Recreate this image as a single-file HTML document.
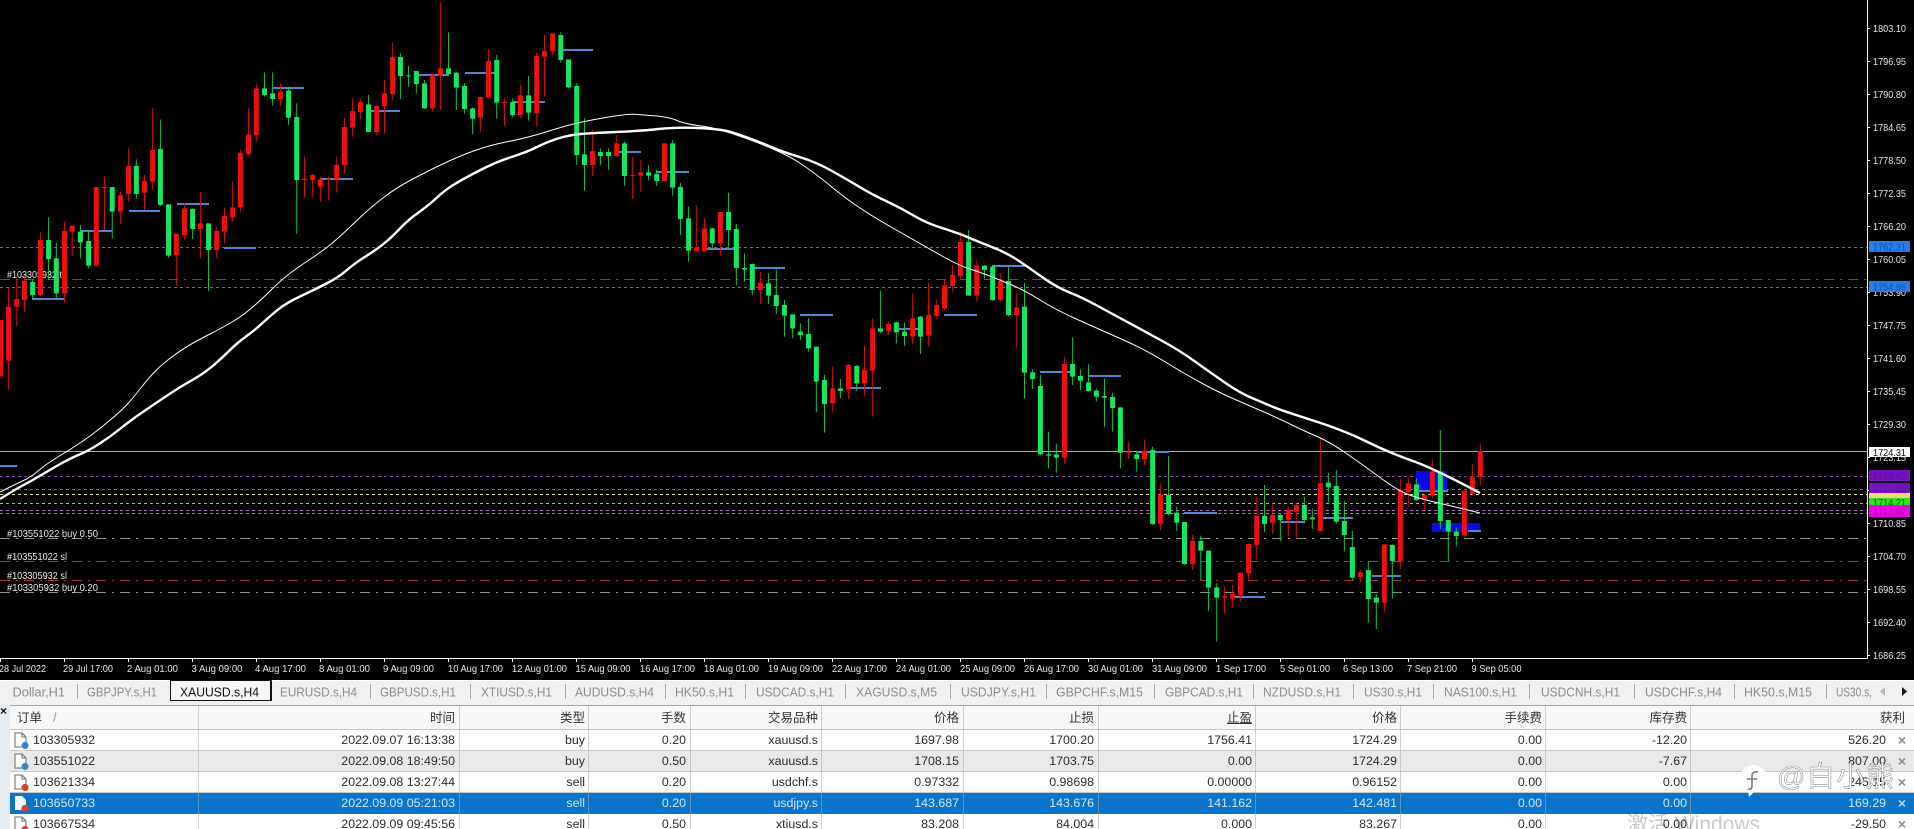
<!DOCTYPE html>
<html lang="zh"><head><meta charset="utf-8"><title>XAUUSD.s,H4</title>
<style>
html,body{margin:0;padding:0;background:#000}
#p{position:relative;width:1914px;height:829px;overflow:hidden;background:#000;font-family:"Liberation Sans","Noto Sans CJK SC",sans-serif}
#c{position:absolute;left:0;top:0}
#c text{font-family:"Liberation Sans",sans-serif;font-size:10.5px;fill:#e8e8e8}
#t{position:absolute;left:0;top:680px}
#t text{font-family:"Liberation Sans",sans-serif;font-size:13px;fill:#8c8c8c}
#tabs{position:absolute;left:0;top:680px;width:1914px;height:25px;background:#f0f0f0;border-top:1px solid #fff;box-sizing:border-box}
#tabs i{position:absolute;top:3px;width:1px;height:15px;background:#a8a8a8}
#tabs b{position:absolute;left:170px;top:-1px;width:99px;height:19px;background:#f6f6f6;border:1px solid #111;border-right-width:2px}
#tb{position:absolute;left:0;top:705px;width:1914px;height:124px;background:#fff;border-top:1px solid #a8a8a8;box-sizing:border-box}
.h,.r{position:absolute;left:0;width:1914px;font-size:12.4px;color:#2a2a2a}
.h{top:705px;height:25px;line-height:25px;background:#f7f7f7;border-top:1px solid #a8a8a8;border-bottom:1px solid #c4c4c4;box-sizing:border-box;font-size:12.5px;color:#333}
.r{height:21px;line-height:21px;border-bottom:1px solid #c8c8c8;box-sizing:border-box;background:#fff}
.h span,.r span{position:absolute;top:0;white-space:nowrap}
.g{background:#e9e9e9}.s{background:#0a74cb;color:#cfe6fb;border-bottom-color:#0a74cb}
.c1{left:33px}.c2{right:1459px}.c3{right:1329px}.c4{right:1228px}.c5{right:1096px}.c6{right:955px}.c7{right:820px}.c8{right:662px}.c9{right:517px}.c10{right:372px}.c11{right:227px}.c12{right:28px}
.x{right:8px;color:#8a8a8a;font-size:14px;font-weight:bold}
.s .x{color:#b8d4ee}
.v{position:absolute;top:705px;width:1px;height:124px;background:rgba(170,170,170,.55)}
.ic{position:absolute;left:13px;width:17px;height:18px}
#ls{position:absolute;left:0;top:705px;width:10px;height:124px;background:#e6ebf0;font-size:12px;font-weight:bold;line-height:12px;color:#111}
#win{position:absolute;left:1627px;top:811px;font-size:21px;line-height:28px;color:#c9c9c9;white-space:nowrap;mix-blend-mode:multiply}
#wm{position:absolute;left:1777px;top:755px;font-size:28px;line-height:44px;letter-spacing:1.5px;color:#fff;-webkit-text-stroke:.6px #8d8d8d;white-space:nowrap;opacity:.95}
</style></head><body><div id="p">
<svg id="c" width="1914" height="680" viewBox="0 0 1914 680" fill="none">
<path d="M0 247.5H1867M0 287.5H1867" stroke="#4a78b8" stroke-dasharray="3 3"/>
<path d="M0 279.5H1867" stroke="#a83232" stroke-dasharray="10 6 2 6"/>
<path d="M0 561.5H1867M0 580.5H1867" stroke="#b03434" stroke-dasharray="10 6 2 6"/>
<path d="M0 538.5H1867M0 592.5H1867" stroke="#7f9f84" stroke-dasharray="10 6 2 6"/>
<path d="M0 476.5H1867M0 489.5H1867" stroke="#7a4aa8" stroke-dasharray="3 3"/>
<path d="M0 494.5H1867" stroke="#e8e0a8" stroke-dasharray="3 3"/>
<path d="M0 503.5H1867" stroke="#8ed08e" stroke-dasharray="3 3"/>
<path d="M0 510.5H1867M0 513.5H1867" stroke="#b070c0" stroke-dasharray="3 3"/>
<path d="M0 451.5H1867" stroke="#a8a8a8"/>
<text x="7" y="278" textLength="60" lengthAdjust="spacingAndGlyphs">#103305932 tp</text>
<text x="7" y="537" textLength="91" lengthAdjust="spacingAndGlyphs">#103551022 buy 0.50</text>
<text x="7" y="560" textLength="60" lengthAdjust="spacingAndGlyphs">#103551022 sl</text>
<text x="7" y="579" textLength="60" lengthAdjust="spacingAndGlyphs">#103305932 sl</text>
<text x="7" y="591" textLength="91" lengthAdjust="spacingAndGlyphs">#103305932 buy 0.20</text>
<rect x="1416" y="471" width="31" height="19" fill="#0808e8"/><rect x="1432" y="523" width="48" height="9" fill="#0808e8"/>
<path stroke="#4f86d8" stroke-width="2" d="M33 299H64M80 231H112M129 211H160M177 204H209M224 248H256M273 88H304M320 179H353M369 111H400M416 75H449M465 73H496M513 102H545M561 50H593M616 152H641M656 172H689M705 249H736M752 268H785M800 315H833M944 315H977M992 266H1025M849 388H881M897 329H921M1040 372H1073M1089 376H1121M1137 452H1169M1184 513H1217M1233 597H1265M0 466H17M1419 491H1448M1468 531H1481M1372 576H1401M1281 522H1305M1323 518H1353"/>
<g transform="scale(.40816 .33333)">
<path stroke="#d01018" stroke-width="2.45" d="M21 865V1170M41 840V978M60 825V935M99 697V890M158 665V908M177 677V768M236 561V800M256 530V690M295 575V672M315 445V605M354 525V630M374 325V568M432 702V858M452 610V718M491 575V775M531 680V775M550 625V730M570 545V665M589 450V635M609 325V470M628 250V425M687 250V317M746 470V592M766 522V590M785 530V605M805 530V600M825 470V578M844 355V520M864 295V410M883 295V357M923 315V405M942 240V400M962 128V300M1060 222V335M1079 8V330M1177 290V395M1197 148V295M1236 295V378M1275 255V355M1315 157V380M1334 105V290M1354 100V165M1452 390V528M1511 405V470M1550 470V597"/>
<path stroke="#ee1010" stroke-width="12.25" d="M2 960V1130M21 920V1082M41 897V920M60 843V900M99 720V885M158 693V880M177 677V695M236 561V797M256 561V564M295 585V635M315 498V582M354 543V578M374 450V545M432 702V765M452 625V705M491 670V687M531 693V750M550 648V695M570 622V652M589 458V622M609 403V462M628 265V405M687 275V297M746 536V540M766 525V540M785 538V560M805 536V539M825 495V538M844 381V495M864 333V383M883 306V336M923 318V396M942 280V318M962 171V282M1060 225V325M1079 205V228M1177 291V353M1197 183V293M1236 306V309M1275 286V345M1315 168V340M1334 153V170M1354 100V153M1452 453V495M1511 430V468M1550 525V528"/>
<path stroke="#14c050" stroke-width="2.45" d="M80 838V900M119 652V840M138 728V895M197 675V775M217 690V805M275 561V715M334 478V597M393 358V618M413 613V773M472 625V717M511 670V873M648 217V290M668 217V317M707 260V375M727 310V702M903 285V396M981 160V297M1001 197V260M1020 213V280M1040 240V327M1099 97V225M1118 215V330M1138 250V340M1158 322V402M1217 165V357M1256 295V352M1295 228V362M1374 97V188M1393 178V265M1413 250V495M1432 355V572M1471 445V495M1491 445V510M1530 425V557"/>
<path stroke="#16e660" stroke-width="12.25" d="M80 846V885M119 720V777M138 775V880M197 695V727M217 723V797M275 561V635M334 498V582M393 447V615M413 613V767M472 627V687M511 670V750M648 265V285M668 280V297M707 272V353M727 351V540M903 313V396M981 171V228M1001 226V229M1020 213V252M1040 250V325M1099 205V222M1118 218V263M1138 258V327M1158 325V356M1217 180V308M1256 306V345M1295 286V338M1374 105V180M1393 178V262M1413 258V465M1432 463V495M1471 456V468M1491 456V468M1530 430V528"/>
</g>
<g transform="translate(640 0) scale(.40816 .33333)">
<path stroke="#d01018" stroke-width="2.45" d="M2 480V575M60 430V545M138 615V755M158 655V755M197 635V767M295 815V913M472 1100V1237M511 1090V1197M550 1038V1188M570 955V1250M609 965V1005M668 880V1033M707 848V1040M727 898V958M746 840V932M766 795V875M785 695V840M825 782V905M883 820V905M923 880V1045M1040 1070V1390M1197 1325V1377M1236 1318V1395M1275 1452V1590M1354 1605V1710M1432 1760V1840M1452 1755V1825M1471 1718V1805M1491 1632V1742M1511 1490V1680M1550 1510V1602"/>
<path stroke="#ee1010" stroke-width="12.25" d="M2 517V527M60 430V543M138 742V753M158 685V753M197 636V730M295 848V870M472 1165V1210M511 1095V1168M550 1110V1150M570 985V1112M609 972V992M668 955V1010M707 945V1007M727 915V948M746 856V925M766 825V858M785 726V828M825 797V887M883 843V900M923 922V945M1040 1092V1373M1197 1355V1358M1236 1352V1378M1275 1483V1572M1354 1623V1692M1432 1788V1792M1452 1782V1796M1471 1718V1785M1491 1632V1720M1511 1548V1635M1550 1545V1568"/>
<path stroke="#14c050" stroke-width="2.45" d="M21 495V540M41 510V558M80 420V587M99 548V705M119 620V785M177 683V748M217 578V740M236 672V855M256 760V845M275 790V885M315 820V912M334 808V942M354 900V1010M374 943V1015M393 970V1020M413 955V1055M432 1040V1238M452 1125V1298M491 1137V1195M531 1095V1173M589 872V1000M628 965V1030M648 968V1037M687 948V1062M805 690V887M844 795V835M864 798V903M903 800V950M942 848V1195M962 1107V1167M981 1125V1365M1001 1295V1405M1020 1330V1418M1060 1012V1155M1079 1108V1170M1099 1093V1175M1118 1165V1205M1138 1135V1280M1158 1178V1295M1177 1222V1405M1217 1352V1415M1256 1340V1575M1295 1368V1545M1315 1520V1593M1334 1566V1695M1374 1607V1740M1393 1652V1833M1413 1750V1925M1530 1455V1595"/>
<path stroke="#16e660" stroke-width="12.25" d="M21 517V527M41 522V543M80 430V563M99 561V657M119 655V752M177 685V730M217 636V690M236 687V804M256 804V809M275 792V870M315 850V887M334 885V918M354 915V947M374 943V985M393 995V1005M413 1002V1045M432 1040V1145M452 1140V1212M491 1165V1173M531 1098V1150M589 985V995M628 967V997M648 995V1008M687 950V1010M805 726V887M844 797V810M864 800V900M903 843V945M942 920V1118M962 1117V1137M981 1158V1363M1001 1363V1367M1020 1363V1373M1060 1092V1130M1079 1128V1142M1099 1147V1173M1118 1172V1190M1138 1188V1193M1158 1191V1224M1177 1222V1358M1217 1363V1377M1256 1350V1572M1295 1485V1542M1315 1538V1568M1334 1566V1692M1374 1623V1652M1393 1652V1763M1413 1762V1793M1530 1548V1572"/>
</g>
<g transform="translate(1240 430) scale(.33333)">
<path stroke="#d01018" stroke-width="3" d="M145 230V320M169 220V325M241 25V305M361 418V460M433 343V548M481 145V418M505 140V230M553 190V237M577 88V205M673 182V322M697 103V195M721 40V165"/>
<path stroke="#ee1010" stroke-width="15" d="M145 240V270M169 225V245M241 160V303M361 427V441M433 343V518M481 180V393M505 160V187M553 195V210M577 125V197M673 182V317M697 140V192M721 63V140"/>
<path stroke="#14c050" stroke-width="3" d="M121 250V333M193 200V275M217 235V297M265 128V218M289 120V280M313 213V365M337 303V450M385 395V577M409 492V597M457 343V505M529 145V212M601 0V297M625 270V393M649 293V350"/>
<path stroke="#16e660" stroke-width="15" d="M121 255V270M193 225V270M217 262V268M265 158V172M289 168V275M313 273V315M337 351V443M385 420V507M409 503V518M457 345V393M529 163V210M601 125V273M625 270V305M649 305V318"/>
</g>
<path stroke="#fff" stroke-width="1" d="M0 492Q14 485 22.5 481Q31 477 38 471Q45 465 53 460Q61 455 71.5 448.5Q82 442 92 434.5Q102 427 112 418.5Q122 410 127.5 404Q133 398 140 389Q147 380 154 372.5Q161 365 172.5 356.5Q184 348 194 342.5Q204 337 211 333.5Q218 330 229.5 323.5Q241 317 251 308.5Q261 300 269.5 291.5Q278 283 286 276.5Q294 270 310.5 259Q327 248 337 239Q347 230 359 218.5Q371 207 383.5 197.5Q396 188 410 180.5Q424 173 440.5 165Q457 157 473.5 151Q490 145 508.5 141.5Q527 138 549 131Q571 124 589.5 120.5Q608 117 618.5 115.5Q629 114 634.5 114.3Q640 114.6 654.5 115.8Q669 117 677 120.5Q685 124 701.5 126Q718 128 750.5 140Q783 152 799 162.5Q815 173 835.5 190Q856 207 891 227Q926 247 942 256Q958 265 968.5 268.5Q979 272 987 275Q995 278 1009.5 284Q1024 290 1040 300Q1056 310 1078.5 320Q1101 330 1123.5 340Q1146 350 1164.5 361.5Q1183 373 1201.5 383Q1220 393 1234 399Q1248 405 1264 412Q1280 419 1291 424.5Q1302 430 1316 436Q1330 442 1346.5 453.5Q1363 465 1380 477.5Q1397 490 1407 494Q1417 498 1438.5 503Q1460 508 1480 513"/>
<path stroke="#fff" stroke-width="2.4" stroke-linejoin="round" d="M0 499Q16 489 24.5 484.5Q33 480 43 474Q53 468 62 463Q71 458 79.5 454.5Q88 451 99 444Q110 437 120.5 428.5Q131 420 145 410.5Q159 401 169.5 394Q180 387 188 382.5Q196 378 202 374Q208 370 215 364Q222 358 229.5 350.5Q237 343 246 336.5Q255 330 262 323.5Q269 317 277.5 310Q286 303 300 296.5Q314 290 326.5 283.5Q339 277 347 270Q355 263 365.5 256.5Q376 250 384 243.5Q392 237 400 228.5Q408 220 418.5 212.5Q429 205 437 197.5Q445 190 454 184.5Q463 179 479.5 170.5Q496 162 511.5 157Q527 152 537 147Q547 142 558 138.5Q569 135 581 134Q593 133 616.5 132Q640 131 658.5 129Q677 127 698.5 128Q720 129 729 131.5Q738 134 750 138.5Q762 143 772.5 147.5Q783 152 799.5 157Q816 162 832 171Q848 180 860.5 187.5Q873 195 887 201.5Q901 208 913.5 215.5Q926 223 942 228Q958 233 968.5 237.5Q979 242 993 247.5Q1007 253 1017.5 260Q1028 267 1042 277Q1056 287 1068.5 292Q1081 297 1095 304.5Q1109 312 1125.5 321Q1142 330 1160.5 340Q1179 350 1195 361.5Q1211 373 1225.5 383Q1240 393 1252 398Q1264 403 1272 406.5Q1280 410 1311.5 420Q1343 430 1366.5 441.5Q1390 453 1411.5 460.5Q1433 468 1480 493"/>
<path stroke="#fff" d="M1867.5 0V658.5M0 658.5H1867.5"/>
<path stroke="#fff" d="M1867 28.5h3M1867 61.5h3M1867 94.5h3M1867 127.5h3M1867 160.5h3M1867 193.5h3M1867 226.5h3M1867 259.5h3M1867 292.5h3M1867 325.5h3M1867 358.5h3M1867 391.5h3M1867 424.5h3M1867 457.5h3M1867 490.5h3M1867 523.5h3M1867 556.5h3M1867 589.5h3M1867 622.5h3M1867 655.5h3"/>
<path stroke="#fff" d="M0.5 658v4M64.5 658v4M128.5 658v4M192.5 658v4M256.5 658v4M320.5 658v4M384.5 658v4M448.5 658v4M512.5 658v4M576.5 658v4M640.5 658v4M704.5 658v4M768.5 658v4M832.5 658v4M896.5 658v4M960.5 658v4M1024.5 658v4M1088.5 658v4M1152.5 658v4M1216.5 658v4M1280.5 658v4M1344.5 658v4M1408.5 658v4M1472.5 658v4"/>
<g>
<text x="1873" y="32" textLength="33" lengthAdjust="spacingAndGlyphs">1803.10</text>
<text x="1873" y="65" textLength="33" lengthAdjust="spacingAndGlyphs">1796.95</text>
<text x="1873" y="98" textLength="33" lengthAdjust="spacingAndGlyphs">1790.80</text>
<text x="1873" y="131" textLength="33" lengthAdjust="spacingAndGlyphs">1784.65</text>
<text x="1873" y="164" textLength="33" lengthAdjust="spacingAndGlyphs">1778.50</text>
<text x="1873" y="197" textLength="33" lengthAdjust="spacingAndGlyphs">1772.35</text>
<text x="1873" y="230" textLength="33" lengthAdjust="spacingAndGlyphs">1766.20</text>
<text x="1873" y="263" textLength="33" lengthAdjust="spacingAndGlyphs">1760.05</text>
<text x="1873" y="296" textLength="33" lengthAdjust="spacingAndGlyphs">1753.90</text>
<text x="1873" y="329" textLength="33" lengthAdjust="spacingAndGlyphs">1747.75</text>
<text x="1873" y="362" textLength="33" lengthAdjust="spacingAndGlyphs">1741.60</text>
<text x="1873" y="395" textLength="33" lengthAdjust="spacingAndGlyphs">1735.45</text>
<text x="1873" y="428" textLength="33" lengthAdjust="spacingAndGlyphs">1729.30</text>
<text x="1873" y="461" textLength="33" lengthAdjust="spacingAndGlyphs">1723.15</text>
<text x="1873" y="527" textLength="33" lengthAdjust="spacingAndGlyphs">1710.85</text>
<text x="1873" y="560" textLength="33" lengthAdjust="spacingAndGlyphs">1704.70</text>
<text x="1873" y="593" textLength="33" lengthAdjust="spacingAndGlyphs">1698.55</text>
<text x="1873" y="626" textLength="33" lengthAdjust="spacingAndGlyphs">1692.40</text>
<text x="1873" y="659" textLength="33" lengthAdjust="spacingAndGlyphs">1686.25</text>
</g>
<rect x="1869" y="241" width="41" height="11" fill="#2a80e8"/><text x="1873" y="250.5" textLength="33" lengthAdjust="spacingAndGlyphs" style="fill:#0c4cae">1762.31</text>
<rect x="1869" y="281" width="41" height="11" fill="#2a80e8"/><text x="1873" y="290.5" textLength="33" lengthAdjust="spacingAndGlyphs" style="fill:#0c4cae">1754.86</text>
<rect x="1869" y="447" width="41" height="10" fill="#fff"/><text x="1873" y="456" textLength="33" lengthAdjust="spacingAndGlyphs" style="fill:#111">1724.31</text>
<rect x="1869" y="470" width="41" height="11" fill="#7a10c4"/><text x="1873" y="479.5" textLength="33" lengthAdjust="spacingAndGlyphs" style="fill:#4c1c8e">1719.63</text>
<rect x="1869" y="483" width="41" height="10" fill="#7a10c4"/><text x="1873" y="492" textLength="33" lengthAdjust="spacingAndGlyphs" style="fill:#4c1c8e">1716.23</text>
<rect x="1869" y="493" width="41" height="5" fill="#f0d878"/>
<rect x="1869" y="498" width="41" height="7" fill="#30e020"/><text x="1873" y="506" textLength="33" lengthAdjust="spacingAndGlyphs" style="fill:#1a5a1a">1714.21</text>
<rect x="1869" y="505" width="41" height="12" fill="#f000f0"/><text x="1873" y="515" textLength="33" lengthAdjust="spacingAndGlyphs" style="fill:#a8189c">1712.92</text>
<g>
<text x="-1" y="672" textLength="47" lengthAdjust="spacingAndGlyphs">28 Jul 2022</text>
<text x="63" y="672" textLength="50" lengthAdjust="spacingAndGlyphs">29 Jul 17:00</text>
<text x="127" y="672" textLength="51" lengthAdjust="spacingAndGlyphs">2 Aug 01:00</text>
<text x="191.5" y="672" textLength="51" lengthAdjust="spacingAndGlyphs">3 Aug 09:00</text>
<text x="255" y="672" textLength="51" lengthAdjust="spacingAndGlyphs">4 Aug 17:00</text>
<text x="319" y="672" textLength="51" lengthAdjust="spacingAndGlyphs">8 Aug 01:00</text>
<text x="383" y="672" textLength="51" lengthAdjust="spacingAndGlyphs">9 Aug 09:00</text>
<text x="448" y="672" textLength="55" lengthAdjust="spacingAndGlyphs">10 Aug 17:00</text>
<text x="512" y="672" textLength="55" lengthAdjust="spacingAndGlyphs">12 Aug 01:00</text>
<text x="575.5" y="672" textLength="55" lengthAdjust="spacingAndGlyphs">15 Aug 09:00</text>
<text x="640" y="672" textLength="55" lengthAdjust="spacingAndGlyphs">16 Aug 17:00</text>
<text x="704" y="672" textLength="55" lengthAdjust="spacingAndGlyphs">18 Aug 01:00</text>
<text x="768" y="672" textLength="55" lengthAdjust="spacingAndGlyphs">19 Aug 09:00</text>
<text x="832" y="672" textLength="55" lengthAdjust="spacingAndGlyphs">22 Aug 17:00</text>
<text x="896" y="672" textLength="55" lengthAdjust="spacingAndGlyphs">24 Aug 01:00</text>
<text x="960" y="672" textLength="55" lengthAdjust="spacingAndGlyphs">25 Aug 09:00</text>
<text x="1024" y="672" textLength="55" lengthAdjust="spacingAndGlyphs">26 Aug 17:00</text>
<text x="1088" y="672" textLength="55" lengthAdjust="spacingAndGlyphs">30 Aug 01:00</text>
<text x="1152" y="672" textLength="55" lengthAdjust="spacingAndGlyphs">31 Aug 09:00</text>
<text x="1216" y="672" textLength="50" lengthAdjust="spacingAndGlyphs">1 Sep 17:00</text>
<text x="1280" y="672" textLength="50" lengthAdjust="spacingAndGlyphs">5 Sep 01:00</text>
<text x="1343" y="672" textLength="50" lengthAdjust="spacingAndGlyphs">6 Sep 13:00</text>
<text x="1407" y="672" textLength="50" lengthAdjust="spacingAndGlyphs">7 Sep 21:00</text>
<text x="1471.5" y="672" textLength="50" lengthAdjust="spacingAndGlyphs">9 Sep 05:00</text>
</g>
</svg>
<div id="tabs">
<i style="left:77px"></i><b></b><i style="left:370px"></i><i style="left:470px"></i><i style="left:565px"></i><i style="left:665px"></i><i style="left:745px"></i><i style="left:845px"></i><i style="left:950px"></i><i style="left:1046px"></i><i style="left:1154px"></i><i style="left:1253px"></i><i style="left:1353px"></i><i style="left:1433px"></i><i style="left:1529px"></i><i style="left:1634px"></i><i style="left:1734px"></i><i style="left:1826px"></i>
</div>
<svg id="t" width="1914" height="25" viewBox="0 680 1914 25">
<text x="12.5" y="696.5" textLength="52.5" lengthAdjust="spacingAndGlyphs">Dollar,H1</text>
<text x="87" y="696.5" textLength="70" lengthAdjust="spacingAndGlyphs">GBPJPY.s,H1</text>
<text x="180" y="696.5" textLength="79" lengthAdjust="spacingAndGlyphs" style="fill:#111">XAUUSD.s,H4</text>
<text x="280" y="696.5" textLength="77" lengthAdjust="spacingAndGlyphs">EURUSD.s,H4</text>
<text x="380" y="696.5" textLength="76" lengthAdjust="spacingAndGlyphs">GBPUSD.s,H1</text>
<text x="481" y="696.5" textLength="71" lengthAdjust="spacingAndGlyphs">XTIUSD.s,H1</text>
<text x="575" y="696.5" textLength="79" lengthAdjust="spacingAndGlyphs">AUDUSD.s,H4</text>
<text x="675" y="696.5" textLength="59" lengthAdjust="spacingAndGlyphs">HK50.s,H1</text>
<text x="756" y="696.5" textLength="78" lengthAdjust="spacingAndGlyphs">USDCAD.s,H1</text>
<text x="856" y="696.5" textLength="81" lengthAdjust="spacingAndGlyphs">XAGUSD.s,M5</text>
<text x="961" y="696.5" textLength="75" lengthAdjust="spacingAndGlyphs">USDJPY.s,H1</text>
<text x="1056" y="696.5" textLength="87" lengthAdjust="spacingAndGlyphs">GBPCHF.s,M15</text>
<text x="1165" y="696.5" textLength="78" lengthAdjust="spacingAndGlyphs">GBPCAD.s,H1</text>
<text x="1263" y="696.5" textLength="78" lengthAdjust="spacingAndGlyphs">NZDUSD.s,H1</text>
<text x="1364" y="696.5" textLength="58" lengthAdjust="spacingAndGlyphs">US30.s,H1</text>
<text x="1444" y="696.5" textLength="73" lengthAdjust="spacingAndGlyphs">NAS100.s,H1</text>
<text x="1541" y="696.5" textLength="79" lengthAdjust="spacingAndGlyphs">USDCNH.s,H1</text>
<text x="1645" y="696.5" textLength="77" lengthAdjust="spacingAndGlyphs">USDCHF.s,H4</text>
<text x="1744" y="696.5" textLength="68" lengthAdjust="spacingAndGlyphs">HK50.s,M15</text>
<text x="1836" y="696.5" textLength="36" lengthAdjust="spacingAndGlyphs">US30.s,</text>
<path d="M1885 687v9l-5-4.5z" fill="#b8b8b8"/><path d="M1902 687v9l5-4.5z" fill="#111"/>
</svg>
<div id="tb"></div>
<div class="h"><span class="c1" style="left:17px">订单</span><span style="left:53px;color:#999">/</span><span class="c2">时间</span><span class="c3">类型</span><span class="c4">手数</span><span class="c5">交易品种</span><span class="c6">价格</span><span class="c7">止损</span><span class="c8" style="text-decoration:underline">止盈</span><span class="c9">价格</span><span class="c10">手续费</span><span class="c11">库存费</span><span style="right:9px">获利</span></div>
<div class="r" style="top:730px"><span class="c1">103305932</span><span class="c2">2022.09.07 16:13:38</span><span class="c3">buy</span><span class="c4">0.20</span><span class="c5">xauusd.s</span><span class="c6">1697.98</span><span class="c7">1700.20</span><span class="c8">1756.41</span><span class="c9">1724.29</span><span class="c10">0.00</span><span class="c11">-12.20</span><span class="c12">526.20</span><span class="x">×</span></div>
<div class="r g" style="top:751px"><span class="c1">103551022</span><span class="c2">2022.09.08 18:49:50</span><span class="c3">buy</span><span class="c4">0.50</span><span class="c5">xauusd.s</span><span class="c6">1708.15</span><span class="c7">1703.75</span><span class="c8">0.00</span><span class="c9">1724.29</span><span class="c10">0.00</span><span class="c11">-7.67</span><span class="c12">807.00</span><span class="x">×</span></div>
<div class="r" style="top:772px"><span class="c1">103621334</span><span class="c2">2022.09.08 13:27:44</span><span class="c3">sell</span><span class="c4">0.20</span><span class="c5">usdchf.s</span><span class="c6">0.97332</span><span class="c7">0.98698</span><span class="c8">0.00000</span><span class="c9">0.96152</span><span class="c10">0.00</span><span class="c11">0.00</span><span class="c12">245.15</span><span class="x">×</span></div>
<div class="r s" style="top:793px"><span class="c1">103650733</span><span class="c2">2022.09.09 05:21:03</span><span class="c3">sell</span><span class="c4">0.20</span><span class="c5">usdjpy.s</span><span class="c6">143.687</span><span class="c7">143.676</span><span class="c8">141.162</span><span class="c9">142.481</span><span class="c10">0.00</span><span class="c11">0.00</span><span class="c12">169.29</span><span class="x">×</span></div>
<div class="r" style="top:814px"><span class="c1">103667534</span><span class="c2">2022.09.09 09:45:56</span><span class="c3">sell</span><span class="c4">0.50</span><span class="c5">xtiusd.s</span><span class="c6">83.208</span><span class="c7">84.004</span><span class="c8">0.000</span><span class="c9">83.267</span><span class="c10">0.00</span><span class="c11">0.00</span><span class="c12">-29.50</span><span class="x">×</span></div>
<i class="v" style="left:198px"></i><i class="v" style="left:459px"></i><i class="v" style="left:588px"></i><i class="v" style="left:690px"></i><i class="v" style="left:821px"></i><i class="v" style="left:963px"></i><i class="v" style="left:1098px"></i><i class="v" style="left:1255px"></i><i class="v" style="left:1400px"></i><i class="v" style="left:1545px"></i><i class="v" style="left:1690px"></i>
<svg width="0" height="0" style="position:absolute"><defs>
<symbol id="d" viewBox="0 0 17 18"><path d="M2 1h7l4 4v10H2z" fill="#fff" stroke="#6a6a6a"/><path d="M9 1v4h4" fill="none" stroke="#6a6a6a"/></symbol>
</defs></svg>
<svg class="ic" style="top:732px" viewBox="0 0 17 18"><use href="#d"/><circle cx="12" cy="13.5" r="3.6" fill="#3c84c4"/></svg>
<svg class="ic" style="top:753px" viewBox="0 0 17 18"><use href="#d"/><circle cx="12" cy="13.5" r="3.6" fill="#3c84c4"/></svg>
<svg class="ic" style="top:774px" viewBox="0 0 17 18"><use href="#d"/><circle cx="12" cy="13.5" r="3.6" fill="#d0452c"/></svg>
<svg class="ic" style="top:795px" viewBox="0 0 17 18"><path d="M2 1h7l4 4v10H2z" fill="#fff"/><circle cx="12" cy="13.5" r="3.6" fill="#d0452c"/></svg>
<svg class="ic" style="top:816px" viewBox="0 0 17 18"><use href="#d"/><circle cx="12" cy="13.5" r="3.6" fill="#d0452c"/></svg>
<div id="ls">×</div>
<div id="win">激活 Windows</div>
<svg style="position:absolute;left:1737px;top:763px" width="32" height="36" viewBox="0 0 32 36"><path d="M16 2C8 2 3 8 3 16c0 6 3 10 8 12l1 6 6-6c7-1 12-6 12-12C30 8 24 2 16 2z" fill="#fff"/><path d="M21 9c-4-1-6 1-6 4v10c0 2-1 4-4 3M10 16h10" fill="none" stroke="#777" stroke-width="1.6"/></svg>
<div id="wm">@白小熊</div>
</div></body></html>
